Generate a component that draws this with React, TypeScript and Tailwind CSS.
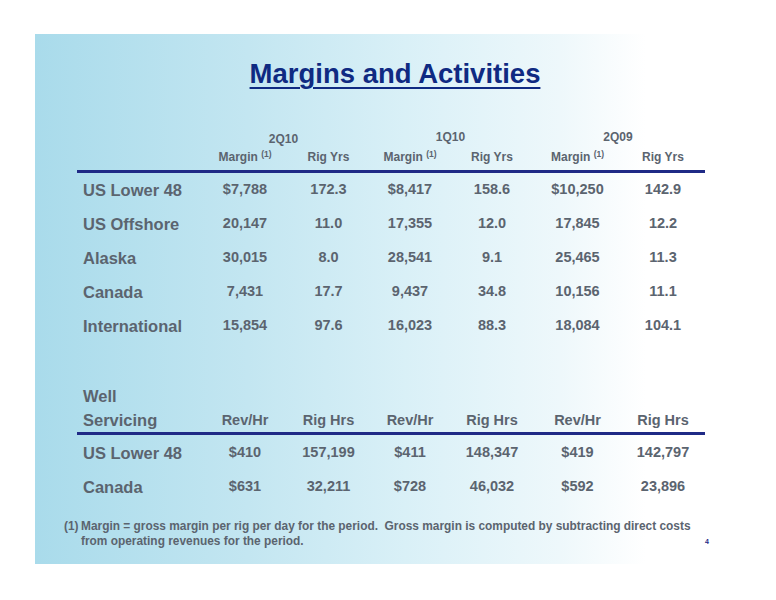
const periods = ['2Q10', '1Q10', '2Q09'];

const rigRows = [
  ['US Lower 48', '$7,788', '172.3', '$8,417', '158.6', '$10,250', '142.9'],
  ['US Offshore', '20,147', '11.0', '17,355', '12.0', '17,845', '12.2'],
  ['Alaska', '30,015', '8.0', '28,541', '9.1', '25,465', '11.3'],
  ['Canada', '7,431', '17.7', '9,437', '34.8', '10,156', '11.1'],
  ['International', '15,854', '97.6', '16,023', '88.3', '18,084', '104.1'],
];

const wellRows = [
  ['US Lower 48', '$410', '157,199', '$411', '148,347', '$419', '142,797'],
  ['Canada', '$631', '32,211', '$728', '46,032', '$592', '23,896'],
];

// label column + six data columns, centred on the reference's column centres
const cols = 'grid grid-cols-[126px_84px_83px_80px_84px_87px_84px]';

function Divider() {
  return <div className="w-[628px] h-[3px] bg-[#1f2a86]" />;
}

function DataRow({ row }: { row: string[] }) {
  return (
    <div className={`${cols} h-[34px] items-center`}>
      <div className="pl-[6px] text-[16.5px]">{row[0]}</div>
      {row.slice(1).map((v, i) => (
        <div key={i} className="text-center text-[14.5px]">
          {v}
        </div>
      ))}
    </div>
  );
}

export default function App() {
  return (
    <div className="w-[776px] h-[600px] bg-white font-['Liberation_Sans',Arial,sans-serif] font-bold text-[#5b646f] overflow-hidden">
      <div className="ml-[35px] mt-[34px] w-[710px] h-[530px] pl-[42px] pt-[24px] flex flex-col bg-[linear-gradient(90deg,#a9dbeb_0%,#c3e6f1_30%,#d9f0f7_52%,#eef8fb_74%,#ffffff_86%)]">
        {/* Title */}
        <h1 className="w-[628px] pl-[8px] text-center text-[27.5px] leading-[32px] text-[#0f2a82] underline decoration-2 underline-offset-[4px]">
          Margins and Activities
        </h1>

        {/* Rig activity table */}
        <div className={`${cols} mt-[39px] h-[16px] text-[12px] leading-[16px]`}>
          <div />
          {periods.map((p, i) => (
            <div key={p} className={`col-span-2 text-center ${i === 0 ? 'pt-[2px] pr-[6px]' : 'pr-[3px]'}`}>
              {p}
            </div>
          ))}
        </div>
        <div className={`${cols} mt-[2px] h-[23px] text-[12px] leading-[20px]`}>
          <div />
          {periods.map((p) => [
            <div key={p + 'm'} className="text-center">
              Margin <span className="relative -top-[4px] text-[8.5px]">(1)</span>
            </div>,
            <div key={p + 'r'} className="text-center">
              Rig Yrs
            </div>,
          ])}
        </div>
        <Divider />
        {rigRows.map((r) => (
          <DataRow key={r[0]} row={r} />
        ))}

        {/* Well servicing table */}
        <div className={`${cols} mt-[41px] items-end leading-[24px]`}>
          <div className="pl-[6px] text-[16.5px]">
            Well
            <br />
            Servicing
          </div>
          {periods.map((p) => [
            <div key={p + 'h'} className="text-center text-[14.5px]">
              Rev/Hr
            </div>,
            <div key={p + 'g'} className="text-center text-[14.5px]">
              Rig Hrs
            </div>,
          ])}
        </div>
        <Divider />
        <div className="mt-[1px]">
          {wellRows.map((r) => (
            <DataRow key={r[0]} row={r} />
          ))}
        </div>

        {/* Footnote */}
        <div className="mt-[15px] -ml-[13px] flex items-end text-[11.9px] leading-[15px]">
          <span className="w-[17px] shrink-0 self-start">(1)</span>
          <p className="w-[624px]">
            Margin = gross margin per rig per day for the period.&nbsp; Gross margin is computed by subtracting direct costs
            from operating revenues for the period.
          </p>
          <span className="ml-[0px] mb-[3px] text-[7px] leading-[8px] text-[#1f2a86]">4</span>
        </div>
      </div>
    </div>
  );
}
